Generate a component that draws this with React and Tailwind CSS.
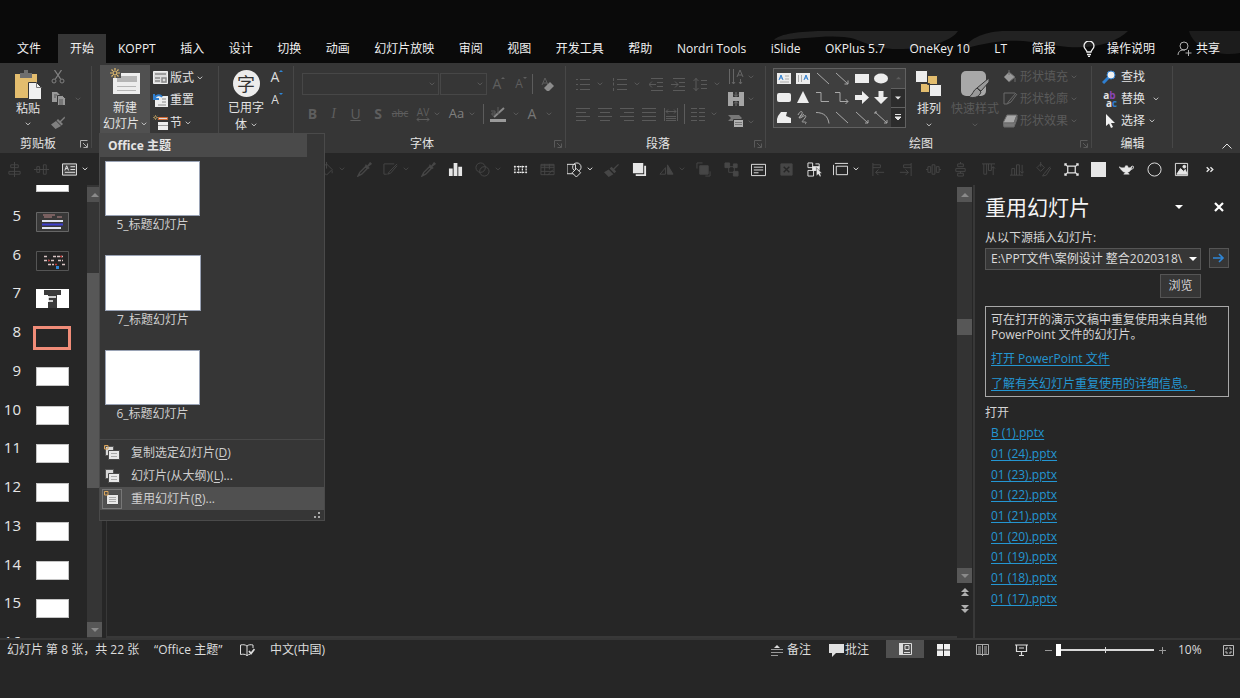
import clsx from 'clsx'

const tabs = [
  'KOPPT', '插入', '设计', '切换', '动画', '幻灯片放映', '审阅', '视图', '开发工具', '帮助',
  'Nordri Tools', 'iSlide', 'OKPlus 5.7', 'OneKey 10', 'LT', '简报',
]

const slides = [5, 6, 7, 8, 9, 10, 11, 12, 13, 14, 15, 16]

const recentFiles = [
  'B (1).pptx', '01 (24).pptx', '01 (23).pptx', '01 (22).pptx', '01 (21).pptx',
  '01 (20).pptx', '01 (19).pptx', '01 (18).pptx', '01 (17).pptx',
]

function Svg({ w = 16, h = 16, box, className, children }) {
  return (
    <svg
      width={w}
      height={h}
      viewBox={box || `0 0 ${w} ${h}`}
      fill="none"
      stroke="currentColor"
      aria-hidden="true"
      className={clsx('shrink-0', className)}
    >
      {children}
    </svg>
  )
}

function Chevron({ className = 'text-[#c8c8c8]' }) {
  return (
    <Svg w={6} h={4} className={className}>
      <path d="M.8.7 3 2.9 5.2.7" />
    </Svg>
  )
}

function Caret({ up, className = 'text-[#8a8a8a]' }) {
  return (
    <Svg w={8} h={4} className={className}>
      <path d={up ? 'M0 4 4 0l4 4z' : 'M0 0h8L4 4z'} fill="currentColor" stroke="none" />
    </Svg>
  )
}

function IconButton({ label, className, children, ...rest }) {
  return (
    <button type="button" aria-label={label} title={label} className={clsx('flex shrink-0 items-center', className)} {...rest}>
      {children}
    </button>
  )
}

function Launcher({ dim }) {
  return (
    <IconButton label="更多选项" className={clsx('h-5 w-4 justify-center', dim ? 'text-[#5a5a5a]' : 'text-[#b0b0b0]')}>
      <Svg w={8} h={8}>
        <path d="M.5 7.500v-7h7M3 3l4 4M7.500 3.500v4h-4" />
      </Svg>
    </IconButton>
  )
}

function Group({ title, launcher, className, children }) {
  return (
    <section className={clsx('relative flex shrink-0 flex-col', className)}>
      <div className="flex h-[72px] pt-[2px]">{children}</div>
      <div className="flex h-[18px] items-center">
        {title && <h2 className="flex-1 text-center">{title}</h2>}
        {launcher && <Launcher dim={launcher === 'dim'} />}
      </div>
      <span className="absolute right-0 top-[3px] h-[82px] w-px bg-[#474747]" />
    </section>
  )
}

function Star() {
  return (
    <g stroke="#e3bd6e" strokeWidth="1.2">
      <circle cx="5" cy="5" r="2" />
      <path d="M5 0v2M5 8v2M0 5h2M8 5h2M1.500 1.500l1.400 1.400M7.100 7.100l1.400 1.400M8.500 1.500 7.100 2.900M1.500 8.500l1.400-1.400" />
    </g>
  )
}

function PasteIcon() {
  return (
    <Svg w={28} h={30}>
      <path d="M1 4h22v24H1z" fill="#e3bd6e" stroke="none" />
      <path d="M6 3h4V0h4v3h4v5H6z" fill="#6f6f6f" stroke="none" />
      <path d="M14.500 12.500h8l5 5v12h-13z" fill="#f0f0f0" stroke="#363636" />
      <path d="M22.500 12.500v5h5" stroke="#777" />
    </Svg>
  )
}

function ClipboardGroup() {
  return (
    <Group title="剪贴板" launcher className="w-[92px]">
      <button type="button" className="ml-[6px] flex w-[44px] flex-col items-center pt-[5px]">
        <PasteIcon />
        <span className="leading-[17px]">粘贴</span>
        <span className="flex h-[13px] items-center"><Chevron /></span>
      </button>
      <div className="flex flex-col text-[#808080]">
        <IconButton label="剪切" className="h-[23px] w-4 justify-center">
          <Svg w={14} h={14}>
            <path d="M3.500 0 9.600 9M10.500 0 4.400 9" strokeWidth="1.300" />
            <circle cx="3" cy="11" r="2" />
            <circle cx="11" cy="11" r="2" />
          </Svg>
        </IconButton>
        <IconButton label="复制" className="h-[22px] w-8 justify-center gap-[9px]">
          <Svg w={14} h={14}>
            <path d="M0 0h5l3 3v7H0z" fill="#999" stroke="none" />
            <path d="M5.500 3.500h5l3 3v7h-8z" fill="#999" stroke="#363636" />
            <path d="M2 3h3M2 5h2M7 8h4M7 10h4M7 12h4" stroke="#555" />
          </Svg>
          <Chevron className="text-[#5a5a5a]" />
        </IconButton>
        <IconButton label="格式刷" className="h-[23px] w-4 justify-center">
          <Svg w={14} h={14}>
            <path d="M13.500 1.500 9 6l-2-2-1.500 1.500 5 5L12 9l-2-2 4-4zM5 6 0 9.500 4.500 14 10 11z" fill="currentColor" stroke="none" />
          </Svg>
        </IconButton>
      </div>
    </Group>
  )
}

function NewSlideMenu() {
  const layouts = [
    { name: '5_标题幻灯片', size: 'h-[55px] w-[95px]', gap: 'mb-[30px]' },
    { name: '7_标题幻灯片', size: 'h-[56px] w-[96px]', gap: 'mb-[30px]' },
    { name: '6_标题幻灯片', size: 'h-[55px] w-[95px]', gap: '' },
  ]
  const actions = [
    { text: '复制选定幻灯片(', key: 'D', end: ')' },
    { text: '幻灯片(从大纲)(', key: 'L', end: ')...' },
    { text: '重用幻灯片(', key: 'R', end: ')...', active: true },
  ]
  return (
    <div className="absolute -left-px top-full z-20 w-[226px] border border-[#4a4a4a] bg-[#363636] text-[#cfcfcf]">
      <h3 className="mr-[17px] bg-[#4a4a4a] pl-2 font-bold leading-[23px] text-[#e4e4e4]">Office 主题</h3>
      <ul className="h-[283px] border-b border-[#484848] pl-[5px] pt-[4px]">
        {layouts.map((layout) => (
          <li key={layout.name} className={layout.gap}>
            <button type="button" className="flex flex-col items-center">
              <span className={clsx('border border-[#9aa3b5] bg-white', layout.size)} />
              <span className="h-[9px] leading-[17px]">{layout.name}</span>
            </button>
          </li>
        ))}
      </ul>
      <ul className="pt-px">
        {actions.map((item, i) => (
          <li key={item.key}>
            <button type="button" className={clsx('flex h-[23px] w-full items-center pl-[2px] pt-px', item.active && 'bg-[#505050]')}>
              <span className={clsx('mr-[9px] flex h-5 w-5 items-center justify-center border', item.active ? 'border-[#777]' : 'border-transparent')}>
                <Svg w={16} h={16}>
                  {i < 2 && <path d="M1.500 1.500h8v9h-8z" fill="#d8d8d8" stroke="#555" />}
                  <path d={i < 2 ? 'M4.500 5.500h11v9h-11z' : 'M2.500 3.500h12v10h-12z'} fill="#e8e8e8" stroke="#4a4a4a" />
                  <path d={i < 2 ? 'M7 8.500h6M7 11.500h6' : 'M5 6.500h7M5 8.500h7M5 10.500h7'} stroke="#aaa" />
                  {i !== 1 && <path d="M.5.500h3.500v3.500h-3.500z" stroke="#d9a45b" />}
                </Svg>
              </span>
              {item.text}<u className="underline-offset-2">{item.key}</u>{item.end}
            </button>
          </li>
        ))}
      </ul>
      <div className="flex h-[10px] items-center justify-end pr-[3px] text-[#a8a8a8]">
        <Svg w={7} h={7}>
          <path d="M4 0h2v2H4zM4 4h2v2H4zM0 4h2v2H0z" fill="currentColor" stroke="none" />
        </Svg>
      </div>
    </div>
  )
}

function SlidesGroup() {
  return (
    <Group className="w-[127px]">
      <div className="relative ml-2 h-[68px]">
        <button type="button" aria-expanded="true" className="flex h-[68px] w-[50px] flex-col items-center bg-[#505050] pt-[3px]">
          <Svg w={30} h={29}>
            <path d="M3 5h27v21H3z" fill="#ededed" stroke="none" />
            <path d="M7 8h20v6H7z" fill="#b5b5b5" stroke="none" />
            <path d="M7 18.500h19M7 22.500h19" stroke="#b5b5b5" />
            <path d="M0 0h11v10H3z" fill="#505050" stroke="none" />
            <Star />
          </Svg>
          <span className="pt-[2px] leading-[18px]">新建</span>
          <span className="flex items-center gap-[2px] leading-[13px]">幻灯片 <Chevron /></span>
        </button>
        <NewSlideMenu />
      </div>
      <div className="flex flex-col pl-[3px] pt-px">
        <button type="button" className="flex h-[23px] items-center gap-[2px]">
          <Svg w={15} h={13}>
            <path d="M.5.500h14v12H.5z" fill="#dcdcdc" stroke="#f0f0f0" />
            <path d="M2 3h11M2 7h5M2 10h5M9 7h4v4H9z" stroke="#888" strokeWidth="1.500" />
          </Svg>
          版式<span className="ml-px"><Chevron /></span>
        </button>
        <button type="button" className="flex h-[22px] items-center gap-[2px]">
          <Svg w={15} h={14}>
            <path d="M2 3h13v11H2z" fill="#ededed" stroke="none" />
            <path d="M9 6h4M9 9h4M5 12h8" stroke="#888" />
            <path d="M1 1v5h5M1.500 5.500C3 2 7 1 9 4" stroke="#2f7fd0" strokeWidth="2" />
          </Svg>
          重置
        </button>
        <button type="button" className="flex h-[23px] items-center gap-[2px]">
          <Svg w={15} h={15}>
            <path d="M5.500 2.500h9v2h-9z" fill="#dcdcdc" stroke="#d06a35" />
            <path d="M5 7h10v8H5z" fill="#ededed" stroke="none" />
            <path d="M5 10.500h10" stroke="#999" />
            <g transform="scale(.5)"><Star /></g>
          </Svg>
          节<span className="ml-px"><Chevron /></span>
        </button>
      </div>
    </Group>
  )
}

function UsedFontsGroup() {
  return (
    <Group className="w-[75px]">
      <button type="button" className="ml-2 flex w-[38px] flex-col items-center pt-[5px]">
        <span className="mb-px flex h-[27px] w-[27px] items-center justify-center rounded-full bg-[#ececec] text-lg leading-none text-[#333]">字</span>
        <span className="leading-[20px]">已用字</span>
        <span className="flex items-center gap-[4px] leading-[13px]">体 <Chevron /></span>
      </button>
      <div className="flex flex-col pl-[4px] text-[#dcdcdc]">
        <IconButton label="增大字号" className="h-[23px] w-4 justify-center">
          <span className="text-sm">A</span>
          <Caret up className="-mt-3 w-1 text-[#2f86d6]" />
        </IconButton>
        <IconButton label="减小字号" className="h-[23px] w-4 justify-center">
          <span className="text-xs">A</span>
          <Caret className="-mt-3 w-1 text-[#2f86d6]" />
        </IconButton>
      </div>
    </Group>
  )
}

const dimChevron = <Chevron className="text-[#5c5c5c]" />

function FontGroup() {
  return (
    <Group title="字体" launcher="dim" className="w-[272px]">
      <div className="flex flex-col pl-2 pt-2 text-[#5e5e5e]">
        <div className="flex h-[22px] items-center">
          <label className="relative flex items-center">
            <select disabled aria-label="字体名称" className="h-[22px] w-[137px] appearance-none border border-[#474747]" />
            <span className="absolute right-1">{dimChevron}</span>
          </label>
          <label className="relative ml-px flex items-center">
            <select disabled aria-label="字号" className="h-[22px] w-[47px] appearance-none border border-[#474747]" />
            <span className="absolute right-1">{dimChevron}</span>
          </label>
          <IconButton label="增大" className="w-[24px] justify-center"><span className="text-sm">A</span><Caret up className="-mt-3 w-1" /></IconButton>
          <IconButton label="减小" className="w-[20px] justify-center"><span>A</span><Caret className="-mt-3 w-1" /></IconButton>
          <span className="mx-px h-5 w-px bg-[#5c5c5c]" />
          <IconButton label="清除格式" className="w-[28px] justify-center">
            <Svg w={14} h={14}>
              <path d="M1 8 4 1l3 7M2 6h4" />
              <path d="m3 11 6-6 4 4-5 5H6z" fill="#8c8c8c" stroke="none" />
            </Svg>
          </IconButton>
        </div>
        <div className="mt-[7px] flex h-6 items-center">
          <IconButton label="加粗" className="w-[21px] justify-center text-sm font-bold">B</IconButton>
          <IconButton label="倾斜" className="w-[21px] justify-center font-['Liberation_Serif',serif] text-sm italic">I</IconButton>
          <IconButton label="下划线" className="w-[23px] justify-center text-sm underline">U</IconButton>
          <IconButton label="阴影" className="w-[22px] justify-center text-sm font-bold">S</IconButton>
          <IconButton label="删除线" className="w-[22px] justify-center text-[10px] line-through">abc</IconButton>
          <IconButton label="字符间距" className="w-[34px] justify-center gap-[4px]">
            <span className="flex flex-col items-center text-[10px] leading-[10px]">AV
              <Svg w={14} h={5}><path d="M1 2.500h12M3 .5l-2 2 2 2M11 .5l2 2-2 2" /></Svg>
            </span>
            {dimChevron}
          </IconButton>
          <IconButton label="更改大小写" className="w-[34px] justify-center gap-[5px] text-[13px] text-[#808080]">Aa{dimChevron}</IconButton>
          <span className="mx-[4px] h-5 w-px bg-[#5c5c5c]" />
          <IconButton label="突出显示" className="w-[32px] justify-center gap-[7px] text-[#888]">
            <Svg w={16} h={16}>
              <path d="M0 13h16v3H0z" fill="#9a9a9a" stroke="none" />
              <path d="m4 11 10-9" strokeWidth="2" />
              <path d="M1 5h4v4H2V7h3M8 1v7" stroke="#5c5c5c" />
            </Svg>
            {dimChevron}
          </IconButton>
          <IconButton label="字体颜色" className="w-[40px] justify-center gap-[10px] text-sm text-[#777]">A{dimChevron}</IconButton>
        </div>
      </div>
    </Group>
  )
}

function Lines({ d = 'M0 .5h14M0 4.500h14M0 8.500h14M0 12.500h14' }) {
  return <Svg w={14} h={13}><path d={d} /></Svg>
}

function ParagraphGroup() {
  return (
    <Group title="段落" launcher="dim" className="w-[200px]">
      <div className="flex flex-col pl-[10px] pt-2 text-[#5a5a5a]">
        <div className="flex h-[22px] items-center">
          <IconButton label="项目符号" className="w-[37px] gap-[7px]">
            <Lines d="M0 1.500h2M0 6.500h2M0 11.500h2M4 1.500h10M4 6.500h10M4 11.500h10" />{dimChevron}
          </IconButton>
          <IconButton label="编号" className="w-[36px] gap-[7px]">
            <Lines d="M.5 0v3M.5 4.500v3M.5 10v3M4 1.500h10M4 6.500h10M4 11.500h10" />{dimChevron}
          </IconButton>
          <IconButton label="减少缩进" className="w-[22px]"><Lines d="M2 .5h12M8 4.500h6M8 8.500h6M2 12.500h12M7 6.500H0M3 3.500l-3 3 3 3" /></IconButton>
          <IconButton label="增加缩进" className="w-[22px]"><Lines d="M2 .5h12M8 4.500h6M8 8.500h6M2 12.500h12M0 6.500h7M4 3.500l3 3-3 3" /></IconButton>
          <IconButton label="行距" className="w-[30px] gap-[7px]">
            <Lines d="M3 0v13M.5 3 3 .5 5.500 3M.5 10 3 12.500 5.500 10M8 2.500h6M8 6.500h6M8 10.500h6" />{dimChevron}
          </IconButton>
        </div>
        <div className="mt-[7px] flex h-6 items-center">
          <IconButton label="左对齐" className="w-[22px]"><Lines d="M0 .5h14M0 4.500h10M0 8.500h14M0 12.500h10" /></IconButton>
          <IconButton label="居中" className="w-[22px]"><Lines d="M0 .5h14M2 4.500h10M0 8.500h14M2 12.500h10" /></IconButton>
          <IconButton label="右对齐" className="w-[22px]"><Lines d="M0 .5h14M4 4.500h10M0 8.500h14M4 12.500h10" /></IconButton>
          <IconButton label="两端对齐" className="w-[22px]"><Lines /></IconButton>
          <IconButton label="分散对齐" className="w-[14px]"><Lines d="M.5 0v13M13.500 0v13M2 3.500h10M4 1.500l-2 2 2 2M10 1.500l2 2-2 2M2 8.500h10M2 10.500h10M2 12.500h10" /></IconButton>
          <span className="mx-[6px] h-5 w-px bg-[#5c5c5c]" />
          <IconButton label="分栏" className="w-[28px] gap-[6px]"><Lines d="M0 .5h6M0 4.500h6M0 8.500h6M0 12.500h6M8 .5h6M8 4.500h6M8 8.500h6M8 12.500h6" />{dimChevron}</IconButton>
        </div>
      </div>
      <div className="ml-auto flex flex-col pr-3 text-[#666]">
        <IconButton label="文字方向" className="h-[23px] gap-[4px]">
          <Svg w={16} h={16}><path d="M1.500 0v15M5.500 0v15M4 13l1.500 2L7 13M9 8l3-7 3 7M10 6h4M12.500 10v5M11 13l1.500 2 1.500-2" /></Svg>{dimChevron}
        </IconButton>
        <IconButton label="对齐文本" className="h-[22px] gap-[4px]">
          <Svg w={16} h={14}>
            <path d="M0 0h5v14H0zM11 0h5v14h-5zM4 5h8v4H4z" fill="#a5a5a5" stroke="none" />
            <path d="M8 0v4M8 10v4M6 2.500 8 4.500l2-2M6 11.500l2-2 2 2" stroke="#777" />
          </Svg>{dimChevron}
        </IconButton>
        <IconButton label="转换为 SmartArt" className="h-[23px] gap-[4px]">
          <Svg w={16} h={13}>
            <path d="M0 0h11l3 3-3 3H0l3-3z" fill="#777" stroke="none" />
            <path d="M5.500 4.500h10v8h-10z" fill="#b0b0b0" stroke="#363636" />
            <path d="M7 7.500h7M7 9.500h7" stroke="#777" />
          </Svg>{dimChevron}
        </IconButton>
      </div>
    </Group>
  )
}

const W = { fill: '#ededed', stroke: 'none' }
const shapes = [
  <><path d="M0 2h14v11H0z" {...W} /><path d="M2 9 4 4l2 5M3 7h2" stroke="#2f7fd0" /><path d="M8 5h4M8 8h4M3 11h9" stroke="#aaa" /></>,
  <><path d="M0 2h14v11H0z" {...W} /><path d="m8 9 2-5 2 5M9 7h2" stroke="#2f7fd0" /><path d="M2.500 4v7M5.500 4v7" stroke="#aaa" /></>,
  <path d="m1 2 12 11" />,
  <path d="m1 2 12 11M13 9.500V13H9.500" />,
  <path d="M0 3h14v9H0z" {...W} />,
  <ellipse cx="7" cy="7.500" rx="7" ry="5" {...W} />,
  <rect x="0" y="3" width="14" height="9" rx="2" {...W} />,
  <path d="M7 1l6 12H1z" {...W} />,
  <path d="M0 2.500h5v9h8" />,
  <path d="M0 2.500h5v9h8M10.500 9l2.500 2.500L10.500 14" />,
  <path d="M0 5h7V1l7 6.500L7 14v-4H0z" {...W} />,
  <path d="M4.500 1h5v6H14l-7 7-7-7h4.500z" {...W} />,
  <path d="M1 6 4 2h6L9 6l5 2v5H0V9z" {...W} />,
  <path d="M2 5c3-6 6-3 3 0s-2 4 1 2 5-2 3 1-4 4-2 4 5 0 2 2M3 8c2-2 4-3 5-4" />,
  <path d="M0 2.500c8 0 12 4 13 11" />,
  <path d="m1 2 12 11" />,
  <path d="m1 2 12 11M13 10v3h-3" />,
  <path d="m1 2 12 11M13 10v3h-3M1 4V2h2" />,
]

function DrawingGroup() {
  const formats = [
    { text: '形状填充', icon: <path d="m6 2 6 5-6 5-5-5zM6 0v5M12 8v4" fill="#999" /> },
    { text: '形状轮廓', icon: <path d="M12 1H1v11h3M13 1 6 9l-2 3 4-2 6-8" /> },
    { text: '形状效果', icon: <><path d="M4 1h10l-3 8H0z" fill="#a8a8a8" /><path d="M0 9h11l3-8v4l-3 8H1z" fill="#777" /></> },
  ]
  return (
    <Group title="绘图" launcher="dim" className="w-[326px]">
      <div className="ml-[7px] mt-[3px] flex h-[60px] border border-[#616161] bg-[#3f3f3f]">
        <div className="grid w-[117px] grid-cols-6 place-items-center text-[#a8a8a8]">
          {shapes.map((shape, i) => (
            <IconButton key={i} label={`形状 ${i + 1}`}><Svg w={14} h={15}>{shape}</Svg></IconButton>
          ))}
        </div>
        <div className="flex w-[14px] flex-col divide-y divide-[#616161] bg-[#2c2c2c]">
          <IconButton label="上一行" className="flex-1 justify-center bg-[#3f3f3f]"><Caret up className="w-[5px] text-[#5c5c5c]" /></IconButton>
          <IconButton label="下一行" className="flex-1 justify-center"><Caret className="w-[6px] text-[#e4e4e4]" /></IconButton>
          <IconButton label="其他" className="flex-1 justify-center">
            <Svg w={6} h={7}><path d="M0 .5h6M0 3h6L3 6z" fill="#e4e4e4" stroke="#e4e4e4" /></Svg>
          </IconButton>
        </div>
      </div>
      <button type="button" className="ml-[7px] flex w-[32px] flex-col items-center pt-[5px]">
        <Svg w={28} h={29}>
          <path d="M12.500 5.500h10v9h-10zM5.500 13.500h9v9h-9z" fill="#e3bd6e" stroke="#363636" />
          <path d="M.5.500h12v12H.5zM14.500 14.500h12v12h-12z" fill="#ededed" stroke="#363636" />
        </Svg>
        <span className="pt-px leading-[18px]">排列</span>
        <span className="flex h-[13px] items-center"><Chevron /></span>
      </button>
      <button type="button" disabled className="ml-[5px] flex w-[50px] flex-col items-center pt-[5px] text-[#5a5a5a]">
        <Svg w={30} h={29}>
          <rect x="1" y="1" width="25" height="25" rx="5" fill="#a8a8a8" stroke="none" />
          <path d="M29 8v4l-8 9-4-3zM17 18l4 4c-2 6-8 6-12 5 4-2 4-7 8-9z" fill="#999" stroke="#363636" />
        </Svg>
        <span className="pt-px leading-[18px]">快速样式</span>
        <span className="flex h-[13px] items-center">{dimChevron}</span>
      </button>
      <div className="ml-[3px] flex flex-col pt-px text-[#5a5a5a]">
        {formats.map((item) => (
          <button key={item.text} type="button" disabled className="flex h-[22px] items-center gap-[2px]">
            <Svg w={15} h={14} className="text-[#6a6a6a]">{item.icon}</Svg>
            {item.text}<span className="ml-px">{dimChevron}</span>
          </button>
        ))}
      </div>
    </Group>
  )
}

function EditingGroup() {
  return (
    <Group title="编辑" className="w-[81px]">
      <div className="ml-[10px] flex flex-col pt-px">
        <button type="button" className="flex h-[22px] items-center gap-[4px]">
          <Svg w={15} h={14}>
            <path d="m1 13 6-6" stroke="#2f7fd0" strokeWidth="3" />
            <circle cx="9" cy="5" r="4" fill="#f2f2f2" stroke="#2f7fd0" />
          </Svg>
          查找
        </button>
        <button type="button" className="flex h-[22px] items-center gap-[4px]">
          <span className="flex w-[15px] flex-col text-[10px] font-bold leading-[8px]">
            <span>a<span className="text-[#8a45b5]">b</span></span>
            <span className="pl-1">a<span className="text-[#2f7fd0]">c</span></span>
          </span>
          替换<span className="ml-1"><Chevron /></span>
        </button>
        <button type="button" className="flex h-[22px] items-center gap-[4px]">
          <Svg w={15} h={14}>
            <path d="M4 0v12l3-2.500L9 14l2-1-2-4h4z" fill="#f2f2f2" stroke="none" />
          </Svg>
          选择<Chevron />
        </button>
      </div>
    </Group>
  )
}

const eyedropper = <path d="m1 15 2-4 6-6 2 2-6 6zM9 3l4 4M11 5l3-4 1 1-4 3" strokeWidth="1.500" />

// on: enabled (bright) icon, drop: has a drop-down arrow
const quickTools = [
  { name: '填充', drop: true, icon: <path d="m2 8 6-6 6 6-6 6zM8 0v7M14 9v3" /> },
  { name: '取色器', icon: eyedropper },
  { name: '轮廓', drop: true, icon: <path d="M12 2H1v11h3M15 2 7 10l-2 3 3-1 7-8" /> },
  { name: '线条取色', icon: eyedropper },
  { name: '图表', on: true, icon: <path d="M1 7h4v8H1zM6 1h4v14H6zM11 5h4v10h-4z" fill="currentColor" stroke="none" /> },
  { name: '合并形状', drop: true, icon: <><circle cx="6" cy="6" r="5" /><circle cx="10" cy="10" r="5" /></> },
  { name: '网格', on: true, icon: <path d="M2 4v8M6 4v8M10 4v8M14 4v8M1 5h14M1 11h14" strokeDasharray="2 1" strokeWidth="1.300" /> },
  { name: '表格', icon: <path d="M1 2.500h14v11H1zM1 4h14M1 6h14M1 10h14M5 2v12M10 2v6M14 8l-6 6" /> },
  { name: '编辑形状', on: true, drop: true, icon: <><path d="M0 2.500h9v10H0z" /><circle cx="10.500" cy="5.500" r="4.500" /><path d="m10 7 4.500 4.500L10 16l-4.500-4.500z" fill="#262626" /></> },
  { name: '格式刷', icon: <path d="M15 2 10 7 8 5 6 7l5 5 2-2-2-2 5-5zM5 8 0 11l5 5 5-3z" fill="currentColor" stroke="none" /> },
  { name: '阴影', on: true, icon: <path d="M1 1h11v11H1zM13 4h2v11H4v-2h9z" fill="currentColor" stroke="none" /> },
  { name: '旋转', drop: true, icon: <><path d="M1 13h6V6z" /><path d="M9 3v10h6z" fill="currentColor" /></> },
  { name: '上移一层', icon: <><path d="M4 4h9v9H4z" fill="currentColor" /><path d="M1 7V1h6M10 15h5v-5" /></> },
  { name: '下移一层', icon: <><path d="M5 5h6v6H5z" /><path d="M1 1h5v5H1zM10 10h5v5h-5zM10 2h4v4h-4z" fill="currentColor" /></> },
  { name: '文本框', on: true, icon: <path d="M.5 2.500h15v12H.5zM3 5.500h10M3 8.500h10M3 11.500h5" /> },
  { name: '删除', icon: <><path d="M2 2h12v12H2z" fill="currentColor" /><path d="m5 5 6 6M11 5l-6 6" stroke="#262626" strokeWidth="1.500" /></> },
  { name: '选择窗格', on: true, icon: <><path d="M1 1h5v5H1zM1 9h6v6H1zM9 2h4v4" /><path d="M6 5h7v4H6z" fill="currentColor" /><path d="M10 6v9l2-2 2 3 1-1-1-3h2z" fill="currentColor" stroke="#262626" strokeWidth=".5" /></> },
  { name: '裁剪', on: true, drop: true, icon: <><path d="M3.500 4.500h12v9h-12z" /><path d="M2 1.500h14M.5 3v11" /></> },
  { name: '左对齐', icon: <path d="M2 1v14M2 3h8v3H2M14 11H5M8 8l-3 3 3 3" /> },
  { name: '右对齐', icon: <path d="M14 1v14M14 3H6v3h8M2 11h9M8 8l3 3-3 3" /> },
  { name: '横向分布', icon: <path d="M2 5h3v6H2zM11 5h3v6h-3zM6.500 3h3v10h-3zM0 8h2M14 8h2" /> },
  { name: '纵向分布', icon: <path d="M5 2h6v3H5zM3 7h10v3H3zM5 12h6v3H5zM8 0v2M8 10v2" /> },
  { name: '顶端对齐', icon: <path d="M1 2h14M3 2v11h3V2M8 2v7h3V2M13 14V5M11 7l2-2 2 2" /> },
  { name: '底端对齐', icon: <path d="M1 14h14M3 14V7h3v7M8 14V3h3v11M14 3v9M12 10l2 2 2-2" /> },
  { name: '样式', icon: <path d="m1 6 4-4 4 4-4 4zM15 5l-6 7-2 3 4-1 5-8M5 0v5" /> },
  { name: '适应', on: true, icon: <path d="M4 4.500h8v7H4zM1 4V2h2M13 2h2v2M15 12v2h-2M3 14H1v-2M1 2l3 3M15 2l-3 3M1 14l3-3M15 14l-3-3" strokeWidth="1.300" /> },
  { name: '白色', on: true, icon: <path d="M0 0h16v16H0z" fill="currentColor" stroke="none" /> },
  { name: '神灯', on: true, icon: <><path d="M0 5c4 2 4 1 6 1l1-2h2l1 2c2 0 2 0 4-1-1 4-3 6-5 6l2 2H5l2-2C4 11 2 8 0 5z" fill="currentColor" strokeWidth=".5" /><path d="M13 5c3-2 4 2 0 3" /></> },
  { name: '圆形', on: true, icon: <circle cx="8" cy="8" r="7" /> },
  { name: '图片', on: true, icon: <><path d="M1.500 1.500h13v13h-13z" /><path d="m3 13 4-6 3 3 2-2 2 5z" fill="currentColor" /><circle cx="11" cy="5" r="1.500" fill="currentColor" /></> },
  { name: '更多', on: true, icon: <path d="M5 5.500 7.500 8 5 10.500M9 5.500l2.500 2.500L9 10.500" strokeWidth="1.500" /> },
]

function QuickTool({ name, on, drop, icon }) {
  return (
    <IconButton
      label={name}
      className={clsx('h-6 justify-center', drop ? 'w-[36px] gap-[5px]' : 'w-[27px]', on ? 'text-[#e6e6e6]' : 'text-[#464646]')}
    >
      <Svg w={15} h={15} box="0 0 16 16">{icon}</Svg>
      {drop && <Chevron className="" />}
    </IconButton>
  )
}

function QuickAccessBar() {
  return (
    <div className="flex h-8 items-center">
      <div className="flex w-[314px] shrink-0 pl-px">
        <QuickTool name="水平居中" icon={<path d="M8 0v16M4 3h8v3H4zM2 10h12v3H2z" />} />
        <QuickTool name="垂直居中" icon={<path d="M0 8h16M3 5h3v6H3zM10 3h3v10h-3z" />} />
        <span className="w-[2px]" />
        <QuickTool
          name="文本"
          on
          drop
          icon={<><path d="M.5 2h15v12H.5z" fill="#444" /><path d="m3 9 2-5 2 5M4 7h2M9 5h5M9 8h5M3 11h11" /></>}
        />
      </div>
      <div className="mr-[17px] flex flex-1 justify-between">
        {quickTools.map((tool) => <QuickTool key={tool.name} {...tool} />)}
      </div>
    </div>
  )
}

function Thumb({ n }) {
  if (n === 5) {
    return (
      <Svg w={33} h={20}>
        <path d="M.5.500h32v19H.5z" fill="#383838" stroke="#666" />
        <path d="M7 3h12M8 5h8M21 5h5" stroke="#b88" />
        <path d="M6 9h21M6 16h19" stroke="#dfe4f2" strokeWidth="2" />
        <path d="M6 12.500h21" stroke="#3d3fd0" strokeWidth="2" />
      </Svg>
    )
  }
  if (n === 6) {
    return (
      <Svg w={33} h={20}>
        <path d="M.5.500h32v19H.5z" fill="#242424" stroke="#555" />
        <path d="M8 5.500h4M17 5.500h10M8 9.500h5M15 9.500h4M22 9.500h5M12 13.500h6M26 13.500h4" stroke="#d8c4c4" strokeWidth="1.500" strokeDasharray="3 1" />
        <path d="M12 9.500h2M24 5.500h2M19 13.500h2" stroke="#c03a3a" strokeWidth="1.500" />
        <path d="M20 15h3v3h-3z" fill="#2f86d6" stroke="none" />
      </Svg>
    )
  }
  if (n === 7) {
    return (
      <Svg w={33} h={19}>
        <path d="M0 0h33v19H0z" fill="#fff" stroke="none" />
        <path d="M8 1h17v5h-4v13h-9V6H8z" fill="#3a3a3a" stroke="none" />
        <path d="M12 8h8M11 12h6M12 7v6" stroke="#fff" strokeWidth="1.500" />
      </Svg>
    )
  }
  if (n === 8) {
    return <span className="-mx-[3px] -mt-[2px] h-6 w-[38px] border-[3px] border-[#f08c78] bg-[#262626]" />
  }
  return <span className="h-[19px] w-[33px] border border-[#c4c4c4] bg-white" />
}

function SlideList() {
  return (
    <aside className="flex w-[103px] shrink-0">
      <ol className="-mt-[22px] flex h-[504px] w-[87px] flex-col">
        <li className="flex flex-1 items-start">
          <span className="ml-9 mt-[10px] flex"><Thumb /></span>
        </li>
        {slides.map((n) => (
          <li key={n} className="flex flex-1 items-start">
            <span className="mt-[3px] w-[21px] text-right text-[15px] leading-5 text-[#e6e6e6]">{n}</span>
            <span className="ml-[15px] mt-[10px] flex"><Thumb n={n} /></span>
          </li>
        ))}
      </ol>
      <div className="flex w-[15px] flex-col bg-[#353535]">
        <IconButton label="向上滚动" className="mt-[2px] h-[15px] justify-center bg-[#505050]"><Caret up /></IconButton>
        <span className="mt-[71px] h-[215px] bg-[#575757]" />
        <IconButton label="向下滚动" className="mb-px mt-auto h-[15px] justify-center bg-[#575757]"><Caret /></IconButton>
      </div>
    </aside>
  )
}

function CanvasScroll() {
  return (
    <div className="flex w-[18px] shrink-0 flex-col border-r-2 border-[#383838] pt-[2px] text-[#b0b0b0]">
      <div className="flex h-[396px] w-[15px] flex-col bg-[#333]">
        <IconButton label="向上滚动" className="h-[15px] justify-center bg-[#555]"><Caret up /></IconButton>
        <span className="mt-[117px] h-4 bg-[#575757]" />
        <IconButton label="向下滚动" className="mt-auto h-[15px] justify-center bg-[#575757]"><Caret /></IconButton>
      </div>
      <IconButton label="上一张幻灯片" className="h-[17px] w-[15px] justify-center">
        <Svg w={8} h={8}><path d="m0 4 4-4 4 4zM0 8l4-4 4 4z" fill="currentColor" stroke="none" /></Svg>
      </IconButton>
      <IconButton label="下一张幻灯片" className="h-[17px] w-[15px] justify-center">
        <Svg w={8} h={8}><path d="M0 0h8L4 4zM0 4h8L4 8z" fill="currentColor" stroke="none" /></Svg>
      </IconButton>
    </div>
  )
}

function ReusePane() {
  const link = 'text-[#2496d2] underline underline-offset-2'
  return (
    <aside className="w-[265px] shrink-0 pl-[10px] pr-[11px] text-[#d4d4d4]">
      <header className="flex h-[44px] items-center">
        <h2 className="flex-1 text-[21px] text-[#f4f4f4]">重用幻灯片</h2>
        <IconButton label="任务窗格选项" className="w-5 justify-center text-white"><Caret className="" /></IconButton>
        <IconButton label="关闭" className="ml-5 w-5 justify-center text-white">
          <Svg w={10} h={10}><path d="m1 1 8 8M9 1 1 9" strokeWidth="2.200" /></Svg>
        </IconButton>
      </header>
      <label htmlFor="source" className="block h-[19px] leading-[17px]">从以下源插入幻灯片:</label>
      <div className="flex items-start justify-between">
        <div className="relative flex h-[22px] w-[216px] items-center">
          <select id="source" className="h-full w-full appearance-none border border-[#555] bg-[#363636] pl-[5px] pr-4 text-[#dcdcdc]">
            <option>{'E:\\PPT文件\\案例设计 整合2020318\\'}</option>
          </select>
          <Caret className="pointer-events-none absolute right-[4px] text-white" />
        </div>
        <IconButton label="转到" className="h-5 w-5 justify-center border border-[#555] bg-[#363636] text-[#2f86d6]">
          <Svg w={12} h={10}><path d="M0 5h10M6 1l4 4-4 4" strokeWidth="1.600" /></Svg>
        </IconButton>
      </div>
      <button type="button" className="ml-[175px] mt-1 block h-6 w-[41px] border border-[#555] bg-[#363636]">浏览</button>
      <div className="mt-2 h-[91px] border border-[#a8a8a8] px-[5px] pt-[5px]">
        <p className="leading-[15px]">可在打开的演示文稿中重复使用来自其他 PowerPoint 文件的幻灯片。</p>
        <p className="mt-[7px] leading-[20px]"><a href="#open" className={link}>打开 PowerPoint 文件</a></p>
        <p className="mt-[5px] leading-[20px]"><a href="#more" className={link}>了解有关幻灯片重复使用的详细信息。</a></p>
      </div>
      <h3 className="mt-[6px] leading-5">打开</h3>
      <ul className="grid h-[186px] auto-rows-fr pl-[6px]">
        {recentFiles.map((file) => (
          <li key={file} className="flex items-center"><a href="#file" className={link}>{file}</a></li>
        ))}
      </ul>
    </aside>
  )
}

function StatusBar() {
  return (
    <footer className="flex h-[22px] items-center border-t-2 border-[#363636] text-[#dcdcdc]">
      <span className="w-[146px] whitespace-nowrap pl-[7px]">幻灯片 第 8 张，共 22 张</span>
      <span className="w-[94px] pl-2">“Office 主题”</span>
      <Svg w={15} h={14}>
        <path d="M7 3v10M7 3C5 1.500 3 1.500.5 2v9.500c2.500-.5 4.500-.5 6.500 1 1-.8 2-1 3-1.200M7 3c1.500-1.500 4-1.500 6-1v3" />
        <path d="m9 8 2 2.500L14.500 6" strokeWidth="1.800" />
      </Svg>
      <span className="ml-[15px]">中文(中国)</span>
      <button type="button" className="ml-auto flex items-center gap-[4px]">
        <Svg w={12} h={12}><path d="M0 5.500h12M0 8.500h12M0 11.500h7" stroke="#999" /><path d="m3 4 3-3 3 3z" fill="currentColor" stroke="none" /></Svg>
        备注
      </button>
      <button type="button" className="ml-[18px] flex items-center gap-px">
        <Svg w={15} h={13}><path d="M0 0h15v9H7l-4 4V9H0z" fill="#e0e0e0" stroke="none" /></Svg>
        批注
      </button>
      <IconButton label="普通视图" className="ml-[17px] h-[18px] w-[38px] justify-center self-start bg-[#505050]">
        <Svg w={13} h={12}><path d="M.5.500h12v11H.5zM6 2.500h4v4H6zM5 9.500h6" /><path d="M0 0h4v12H0z" fill="currentColor" stroke="none" /></Svg>
      </IconButton>
      <IconButton label="幻灯片浏览" className="w-[39px] justify-center">
        <Svg w={13} h={12}><path d="M0 0h6v5.500H0zM7 0h6v5.500H7zM0 6.500h6V12H0zM7 6.500h6V12H7z" fill="#f0f0f0" stroke="none" /></Svg>
      </IconButton>
      <IconButton label="阅读视图" className="w-[39px] justify-center text-[#aaa]">
        <Svg w={13} h={12}><path d="M.5.500h12v10H.5zM6.500 0v12M2 3h3M2 5h3M2 7h3M2 9h3M8 3h3M8 5h3M8 7h3M8 9h3" /></Svg>
      </IconButton>
      <IconButton label="幻灯片放映" className="w-[38px] justify-center">
        <Svg w={13} h={12}><path d="M0 1h13M1.500 1v6.500h10V1M4 4h5M6.500 8v3.500M4 11.500h5" strokeWidth="1.200" /></Svg>
      </IconButton>
      <IconButton label="缩小" className="w-4 justify-center text-[#999]"><Svg w={7} h={7}><path d="M0 3.500h7" /></Svg></IconButton>
      <span className="relative flex w-[98px] items-center">
        <input
          type="range"
          aria-label="缩放"
          min="10"
          max="400"
          defaultValue="10"
          className="h-3 w-full appearance-none bg-transparent [&::-webkit-slider-runnable-track]:h-[2px] [&::-webkit-slider-runnable-track]:bg-[#d8d8d8] [&::-webkit-slider-thumb]:-mt-[5px] [&::-webkit-slider-thumb]:h-3 [&::-webkit-slider-thumb]:w-[5px] [&::-webkit-slider-thumb]:appearance-none [&::-webkit-slider-thumb]:bg-white"
        />
        <span className="pointer-events-none absolute left-1/2 h-[6px] w-px bg-[#d8d8d8]" />
      </span>
      <IconButton label="放大" className="w-4 justify-center text-[#999]"><Svg w={7} h={7}><path d="M0 3.500h7M3.500 0v7" /></Svg></IconButton>
      <span className="w-[53px] pl-2">10%</span>
      <IconButton label="适应窗口" className="mr-[6px] text-[#bbb]">
        <Svg w={11} h={11}><path d="M.5.500h10v10H.5zM3 5V3h2M8 5V3H6M3 6v2h2M8 6v2H6" /></Svg>
      </IconButton>
    </footer>
  )
}

function TitleTabs() {
  return (
    <header className="relative bg-[#0a0a0a] pt-[34px]">
      <svg className="absolute bottom-0 right-0" width="466" height="32" aria-hidden="true">
        <path d="M0 9C10-2 60 0 88 0h96c-6 10-30 18-60 18S90 8 70 6 30 8 0 9zM190 18C196 4 220 0 230 0h124c-10 10-30 18-60 16s-50-14-104 2z" fill="#222" />
        <path d="M415 0h51v22c-20 4-46-4-51-22z" fill="#1c1c1c" />
      </svg>
      <nav className="relative flex h-[29px] items-center text-[#f0f0f0]">
        <button type="button" className="w-[58px]">文件</button>
        <button type="button" className="h-full w-12 bg-[#363636]">开始</button>
        <div className="ml-3 flex flex-1 justify-between">
          {tabs.map((tab) => <button key={tab} type="button" className="whitespace-nowrap">{tab}</button>)}
        </div>
        <button type="button" className="ml-[27px] flex items-center gap-[12px]">
          <Svg w={12} h={16}>
            <path d="M4 11C4 9 1 8 1 5a5 5 0 0 1 10 0c0 3-3 4-3 6zM4 13.500h4M5 15.500h2" strokeWidth="1.300" />
          </Svg>
          操作说明
        </button>
        <button type="button" className="ml-[22px] mr-5 flex items-center gap-[4px]">
          <Svg w={15} h={15} className="text-[#b0b0b0]">
            <circle cx="7" cy="5" r="4" />
            <path d="M1 14c0-3 2-5 5-5h2M11.500 9v6M8.500 12h6" />
          </Svg>
          共享
        </button>
      </nav>
    </header>
  )
}

export default function App() {
  return (
    <div className="flex min-h-screen flex-col overflow-hidden bg-[#262626] font-['Open_Sans','Noto_Sans_CJK_SC',sans-serif] text-xs text-[#e4e4e4]">
      <TitleTabs />
      <div className="relative z-10 flex bg-[#363636]">
        <ClipboardGroup />
        <SlidesGroup />
        <UsedFontsGroup />
        <FontGroup />
        <ParagraphGroup />
        <DrawingGroup />
        <EditingGroup />
        <IconButton label="折叠功能区" className="ml-auto mr-2 self-end pb-1">
          <Svg w={10} h={6}><path d="m.5 5.500 4.500-4.500 4.500 4.500" /></Svg>
        </IconButton>
      </div>
      <QuickAccessBar />
      <main className="flex h-[453px] overflow-hidden">
        <SlideList />
        <div className="ml-[3px] flex-1 border-b-2 border-l border-[#383838]" />
        <CanvasScroll />
        <ReusePane />
      </main>
      <StatusBar />
    </div>
  )
}
